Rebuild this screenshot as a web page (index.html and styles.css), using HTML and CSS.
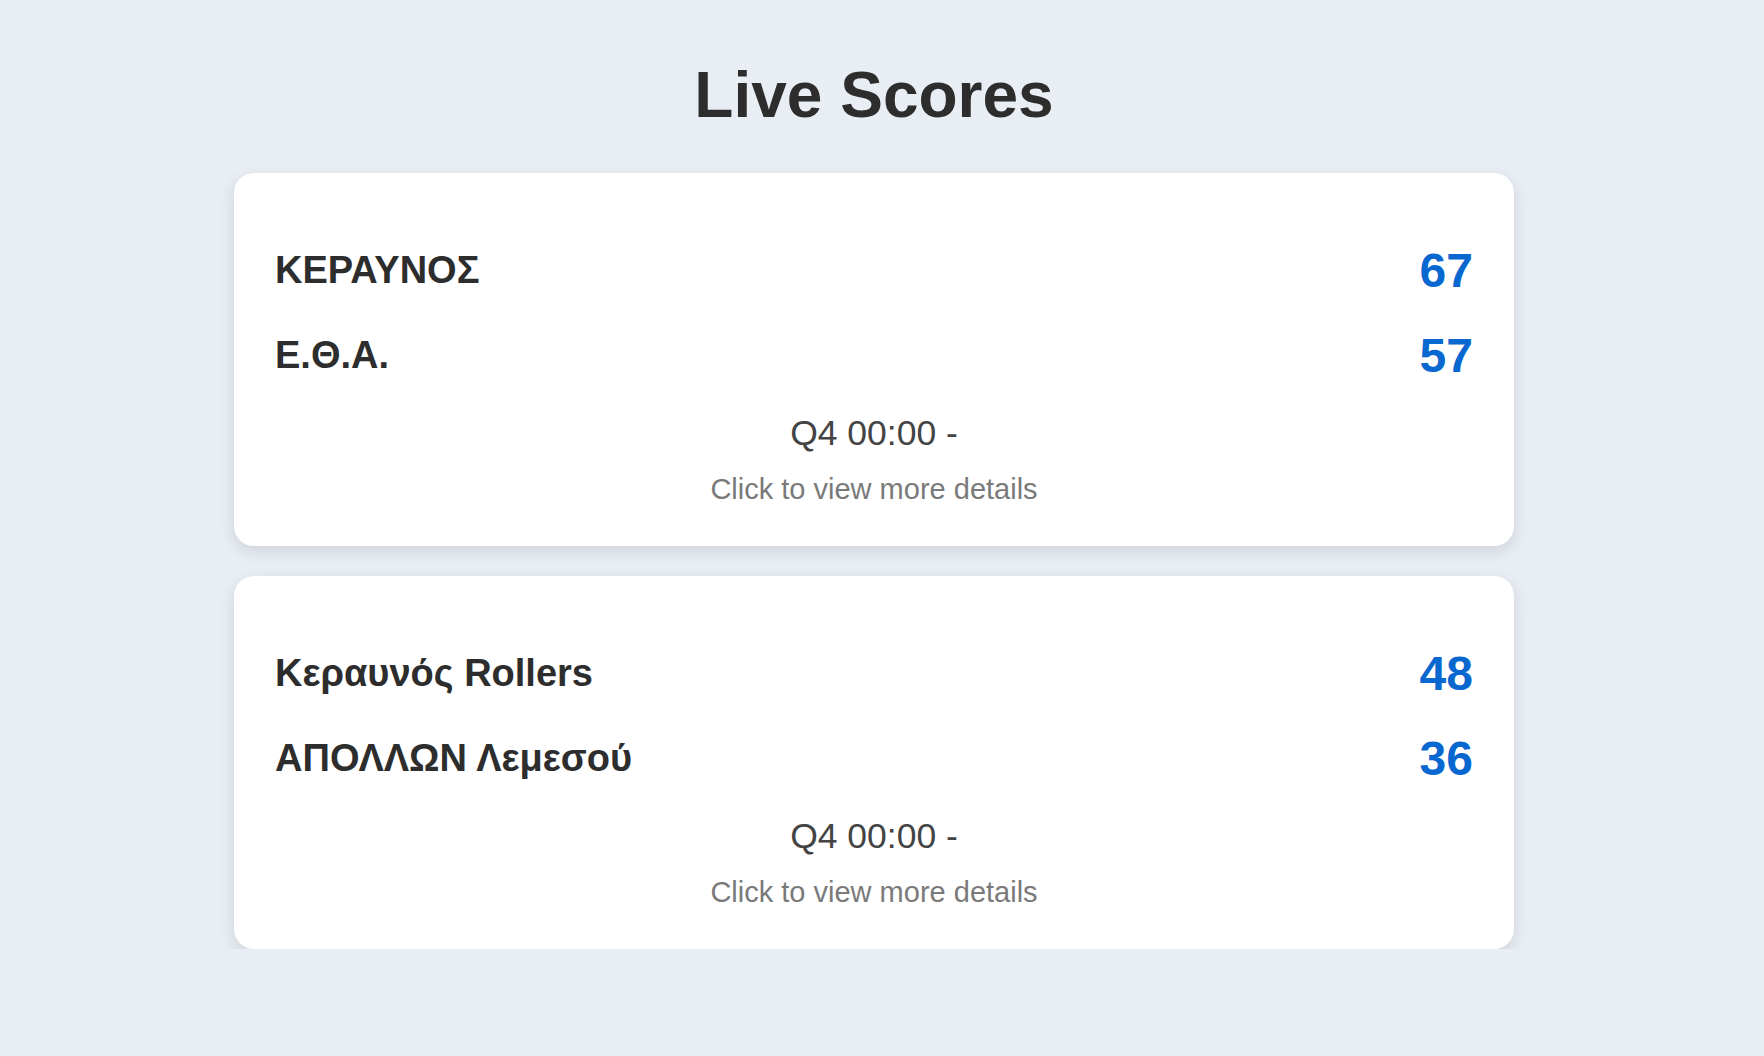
FILE: index.html
```html
<!DOCTYPE html>
<html lang="el">
<head>
<meta charset="utf-8">
<title>Live Scores</title>
<link rel="stylesheet" href="styles.css">
</head>
<body>
<main class="page">
  <h1 class="title">Live Scores</h1>
  <section class="games">
    <article class="card">
      <div class="row">
        <span class="team">ΚΕΡΑΥΝΟΣ</span>
        <span class="score">67</span>
      </div>
      <div class="row">
        <span class="team">Ε.Θ.Α.</span>
        <span class="score">57</span>
      </div>
      <div class="status">Q4 00:00 -</div>
      <div class="details">Click to view more details</div>
    </article>
    <article class="card">
      <div class="row">
        <span class="team">Κεραυνός Rollers</span>
        <span class="score">48</span>
      </div>
      <div class="row">
        <span class="team">ΑΠΟΛΛΩΝ Λεμεσού</span>
        <span class="score">36</span>
      </div>
      <div class="status">Q4 00:00 -</div>
      <div class="details">Click to view more details</div>
    </article>
  </section>
</main>
</body>
</html>
```
FILE: styles.css
```css
html, body {
  margin: 0;
  padding: 0;
}
body {
  background: #e9eef5;
  font-family: "Liberation Sans", Arial, Helvetica, sans-serif;
  color: #2d2d2d;
}
.page {
  padding: 55px 16px 0 0;
}
.title {
  margin: 0;
  text-align: center;
  font-size: 64px;
  line-height: 80px;
  font-weight: 700;
  color: #2d2d2d;
}
.games {
  width: 1280px;
  margin: 38px auto 0;
  display: flex;
  flex-direction: column;
  gap: 30px;
}
.card {
  background: #ffffff;
  border-radius: 20px;
  box-shadow: 0 5px 15px rgba(0, 0, 0, 0.12);
  padding: 67px 41px 41px 41px;
  display: flex;
  flex-direction: column;
}
.row {
  display: flex;
  justify-content: space-between;
  align-items: center;
  height: 60px;
}
.row + .row {
  margin-top: 25px;
}
.team {
  font-size: 38px;
  font-weight: 700;
  color: #2d2d2d;
}
.score {
  font-size: 48px;
  font-weight: 700;
  color: #0868d0;
}
.status {
  margin-top: 26px;
  text-align: center;
  font-size: 35.5px;
  line-height: 44px;
  color: #444444;
}
.details {
  margin-top: 18px;
  text-align: center;
  font-size: 29px;
  line-height: 32px;
  color: #7a7a7a;
}
```
